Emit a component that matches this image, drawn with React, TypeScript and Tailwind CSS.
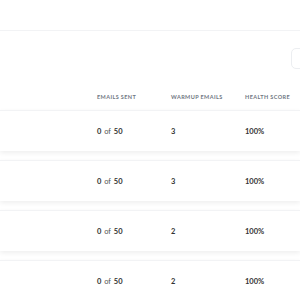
import { ChevronLeft } from "lucide-react";

const rows = [
  { sent: 0, limit: 50, warmup: 3, health: "100%" },
  { sent: 0, limit: 50, warmup: 3, health: "100%" },
  { sent: 0, limit: 50, warmup: 2, health: "100%" },
  { sent: 0, limit: 50, warmup: 2, health: "100%" },
];

export default function App() {
  return (
    <div
      className="w-[300px] h-[300px] overflow-hidden bg-white"
      style={{ fontFamily: "Lato, 'Noto Sans', sans-serif" }}
    >
      {/* Top bar */}
      <div className="h-[31px] border-b border-[#f2f3f5]" />

      {/* Toolbar */}
      <div className="flex justify-end pt-[17px] h-[60px]">
        <button className="h-[21px] w-[20px] -mr-[11px] flex items-center justify-start pl-[6px] rounded-[5px] border border-[#eceef1] bg-white text-[#9aa0a8]">
          <ChevronLeft className="h-[8px] w-[8px]" strokeWidth={3} />
        </button>
      </div>

      {/* Column headers */}
      <div className="grid grid-cols-[97px_74px_74px_1fr] h-[19px] items-start text-[5.5px] font-bold tracking-[0.4px] text-[#6f7782] uppercase pt-[2px]">
        <div />
        <div>Emails sent</div>
        <div>Warmup emails</div>
        <div>Health score</div>
      </div>

      {/* Rows */}
      <div className="flex flex-col gap-[9px]">
        {rows.map((r, i) => (
          <div
            key={i}
            className="grid grid-cols-[97px_74px_74px_1fr] h-[41px] items-center pt-[1px] bg-white shadow-[0_2px_5px_rgba(0,0,0,0.07)] border-t border-[#f2f3f5] text-[7.5px] font-bold text-[#333333]"
          >
            <div />
            <div>
              {r.sent} <span className="font-normal text-[#555555] mx-[1px]">of</span> {r.limit}
            </div>
            <div>{r.warmup}</div>
            <div>{r.health}</div>
          </div>
        ))}
      </div>
    </div>
  );
}
